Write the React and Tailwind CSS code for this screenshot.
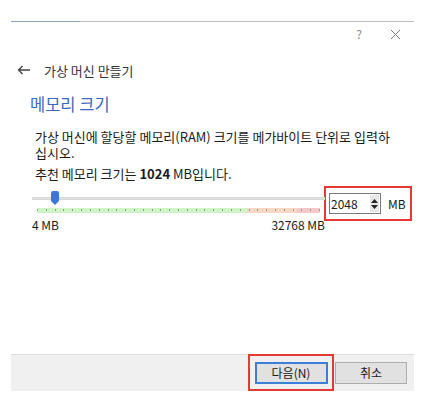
import React from "react";

const font = { fontFamily: '"Noto Sans CJK KR", "Noto Sans", sans-serif' };

export default function App() {
  const ticks = Array.from({ length: 33 });
  return (
    <div className="w-[445px] h-[400px] bg-white overflow-hidden text-[12px] text-[#1a1a1a]" style={font}>
      <div className="ml-[11px] w-[403px] h-[391px] pt-[21px] flex flex-col">
        {/* top line */}
        <div className="flex h-px">
          <div className="w-[69px] bg-[#8ea3b9]" />
          <div className="flex-1 bg-[#bdbdbd]" />
        </div>
        {/* title bar */}
        <div className="h-[24px] flex items-center justify-end">
          <span className="text-[12px] leading-none text-[#8a8a8a] mr-[28px]">?</span>
          <svg width="11" height="11" viewBox="0 0 11 11" className="mr-[13px]">
            <path d="M1 1 L10 10 M10 1 L1 10" stroke="#7a7a7a" strokeWidth="1" fill="none" />
          </svg>
        </div>
        {/* back row */}
        <div className="mt-[16px] h-[16px] flex items-center">
          <svg width="13" height="10" viewBox="0 0 13 10" className="ml-[6px]">
            <path d="M13 5 H1.5 M5.5 1 L1.5 5 L5.5 9" stroke="#444" strokeWidth="1.4" fill="none" />
          </svg>
          <span className="ml-[14px] text-[13px] leading-none text-[#333]">가상 머신 만들기</span>
        </div>
        {/* heading */}
        <div className="mt-[17px] ml-[19px] text-[16.5px] leading-[18px] text-[#3b68c0]">메모리 크기</div>
        {/* description */}
        <div className="mt-[16px] ml-[24px] text-[13px] leading-[16px]">
          <div>가상 머신에 할당할 메모리(RAM) 크기를 메가바이트 단위로 입력하</div>
          <div>십시오.</div>
        </div>
        <div className="mt-[5px] ml-[24px] text-[13px] leading-[16px]">
          추천 메모리 크기는 <b>1024</b> MB입니다.
        </div>
        {/* slider row */}
        <div className="mt-[5px] ml-[21px] flex items-start">
          <div className="w-[293px] flex flex-col">
            <div className="relative h-[21px]">
              <div className="absolute left-0 right-0 top-[10px] h-[3px] bg-[#e3e3e3] border-y border-[#d6d6d6]" />
              <svg width="10" height="15" viewBox="0 0 10 15" className="absolute left-[18px] top-[4px]">
                <path d="M1 2 Q1 0 3 0 H7 Q9 0 9 2 V10 L5 14 L1 10 Z" fill="#3a78d6" />
              </svg>
            </div>
            <div className="ml-[5px] w-[283px] h-[5px] flex">
              <div className="w-[210px] bg-[#cff5c6]" />
              <div className="w-[50px] bg-[#fad6c4]" />
              <div className="flex-1 bg-[#f5c8c8]" />
            </div>
            <div className="ml-[5px] w-[283px] h-[2px] -mt-[4px] flex justify-between">
              {ticks.map((_, i) => (
                <div key={i} className="w-px h-[2px] bg-[#9a9a9a]" />
              ))}
            </div>
            <div className="mt-[7px] flex justify-between text-[12px] leading-[14px]">
              <span>4 MB</span>
              <span>32768 MB</span>
            </div>
          </div>
          <div className="-mt-[1px] ml-[-1px] w-[88px] h-[35px] border-2 border-[#e53935] flex items-center pl-[3px]">
            <div className="w-[52px] h-[21px] border border-[#7a7a7a] bg-white flex items-center">
              <span className="ml-[1px] text-[12px] leading-none flex-1">2048</span>
              <div className="w-[9px] h-[17px] mr-[1px] bg-[#e6e6e6] flex flex-col items-center justify-center gap-[2px]">
                <svg width="7" height="4" viewBox="0 0 7 4"><path d="M0 4 L3.5 0 L7 4 Z" fill="#222" /></svg>
                <svg width="7" height="4" viewBox="0 0 7 4"><path d="M0 0 L3.5 4 L7 0 Z" fill="#222" /></svg>
              </div>
            </div>
            <span className="ml-[7px] text-[12px] leading-none">MB</span>
          </div>
        </div>
        <div className="flex-1" />
        {/* footer */}
        <div className="h-[37px] bg-[#f0f0f0] border-t border-[#dedede] flex justify-end items-stretch pr-[7px]">
          <div className="w-[86px] -mt-px border-2 border-[#e53935] flex items-center justify-center">
            <div className="w-[73px] h-[22px] border-2 border-[#3d7fd8] bg-[#e1e1e1] flex items-center justify-center text-[12px] leading-none">
              다음(N)
            </div>
          </div>
          <div className="ml-[1px] self-center w-[72px] h-[22px] border border-[#adadad] bg-[#e1e1e1] flex items-center justify-center text-[12px] leading-none">
            취소
          </div>
        </div>
      </div>
    </div>
  );
}
